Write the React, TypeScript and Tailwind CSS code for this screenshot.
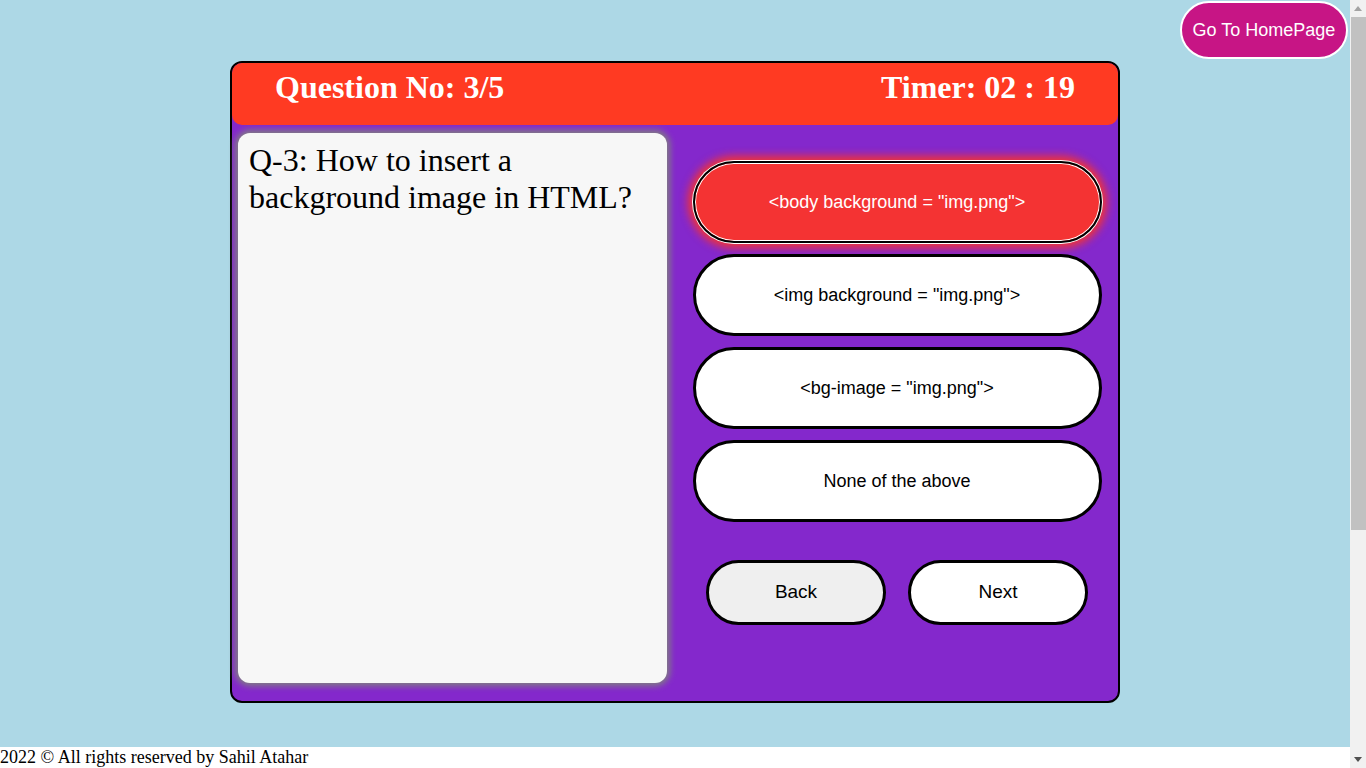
import React from 'react'

const OPTIONS = [
  '<body background = "img.png">',
  '<img background = "img.png">',
  '<bg-image = "img.png">',
  'None of the above',
]

function Scrollbar() {
  return (
    <aside className="sticky top-0 flex h-[768px] w-[16px] shrink-0 flex-col items-center bg-[#f1f1f1]">
      <div className="flex h-[17px] items-center">
        <svg width="8" height="5" viewBox="0 0 8 5">
          <path d="M4 0 L8 5 L0 5 Z" fill="#a3a3a3" />
        </svg>
      </div>
      <div className="h-[513px] w-[15px] bg-[#c1c1c1]" />
      <div className="flex-1" />
      <div className="flex h-[17px] items-center">
        <svg width="8" height="5" viewBox="0 0 8 5">
          <path d="M0 0 L8 0 L4 5 Z" fill="#505050" />
        </svg>
      </div>
    </aside>
  )
}

export default function App() {
  const selected = 0

  return (
    <div className="flex items-start bg-white font-['Liberation_Serif',serif]">
      <div className="min-h-[1100px] w-[1350px] shrink-0">
        <main className="relative h-[747px] bg-[#add8e6] pt-[61px]">
          <button className="absolute right-[2px] top-[1px] h-[58px] w-[168px] rounded-full border-2 border-white bg-[#c71585] font-['Liberation_Sans',Arial,sans-serif] text-[18px] text-white">
            Go To HomePage
          </button>

          <section className="mx-auto flex h-[642px] w-[890px] flex-col rounded-[12px] border-2 border-black bg-[#8428cc]">
            <header className="flex h-[62px] shrink-0 items-start justify-between rounded-[10px] bg-[#ff3a22] px-[43px] pt-[6px] text-[32px] font-bold leading-[37px] text-white">
              <span>Question No: 3/5</span>
              <span>Timer: 02 : 19</span>
            </header>

            <div className="flex flex-1 pb-[18px] pl-[6px] pt-[8px]">
              <div className="w-[429px] rounded-[12px] bg-[#f7f7f7] px-[11px] pt-[9px] text-[32px] leading-[37px] text-black shadow-[0_0_6px_3px_#808080]">
                Q-3: How to insert a background image in HTML?
              </div>

              <div className="flex flex-1 flex-col items-center pl-[25px] pr-[16px] pt-[28px] font-['Liberation_Sans',Arial,sans-serif]">
                <div className="flex w-[409px] flex-col gap-[11px]">
                  {OPTIONS.map((o, i) => (
                    <button
                      key={o}
                      className={
                        i === selected
                          ? 'h-[82px] rounded-full border-2 border-black bg-[#f43333] text-[18px] text-white shadow-[0_0_0_1px_#fff,inset_0_0_0_1px_#fff,0_0_8px_5px_#f43333]'
                          : 'h-[82px] rounded-full border-[3px] border-black bg-white text-[18px] text-black'
                      }
                    >
                      {o}
                    </button>
                  ))}
                </div>

                <div className="mt-[38px] flex gap-[22px]">
                  <button className="h-[65px] w-[180px] rounded-full border-[3px] border-black bg-[#efefef] text-[19px] text-black">
                    Back
                  </button>
                  <button className="h-[65px] w-[180px] rounded-full border-[3px] border-black bg-white text-[19px] text-black">
                    Next
                  </button>
                </div>
              </div>
            </div>
          </section>
        </main>

        <footer className="text-[18px] leading-[21px] text-black">
          2022 © All rights reserved by Sahil Atahar
        </footer>
      </div>
      <Scrollbar />
    </div>
  )
}
